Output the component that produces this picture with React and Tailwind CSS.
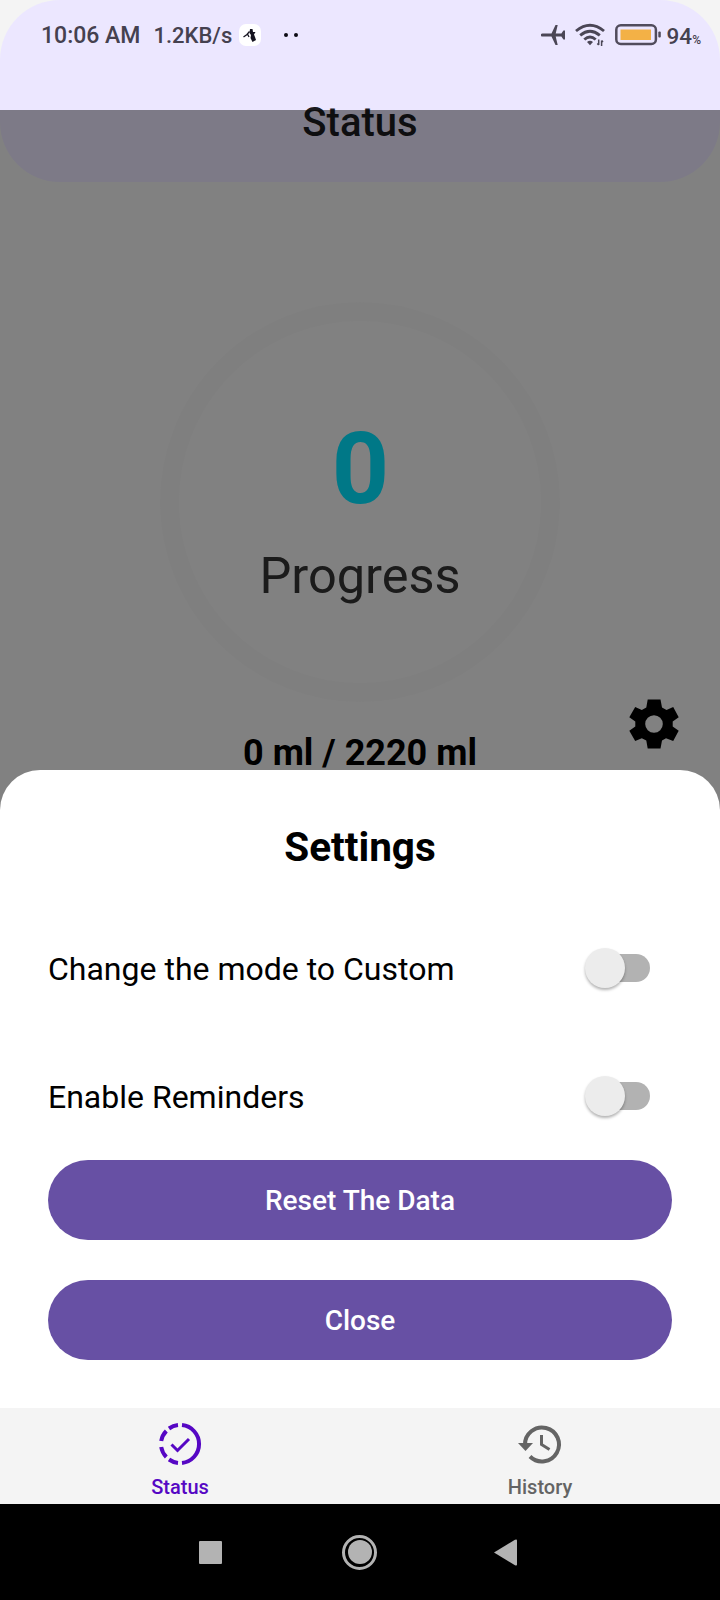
import React from "react";

function StatusBar() {
  return (
    <div className="flex h-[70px] items-center text-[#45414f]">
      <span className="ml-[41px] whitespace-pre text-[23px] leading-[27px] font-medium">10:06 AM</span>
      <span className="ml-[13px] pt-px text-[22px] leading-[27px] font-medium">1.2KB/s</span>
      <span className="ml-[7px] flex size-[22px] items-center justify-center rounded-[7px] bg-white">
        <svg viewBox="0 0 22 22" className="size-[22px]">
          <path d="M11 5l2.500 0 .5 3 2.500 0-1.500 2.500 1 2.500 1 3-3.500 2-2-4 .5-3-1.500-2z" fill="#15131f" />
          <path d="M10.500 7.500L8 10.500 4.500 13M8.500 10l1.500 3" fill="none" stroke="#15131f" strokeWidth="1.300" />
        </svg>
      </span>
      <span className="ml-[23px] flex gap-[6px]">
        <i className="size-1 rounded-full bg-[#0d0b14]" />
        <i className="size-1 rounded-full bg-[#0d0b14]" />
      </span>
      <svg viewBox="0 0 24 22" className="ml-auto h-[22px] w-6" fill="#4b4656">
        <path d="M1.500 9.400h9L14.500 1h2.200l-2 8.400h5.700L22.400 6.500H24v9h-1.600l-2-2.900h-5.700l2 8.400h-2.200l-4-8.400h-9a1.600 1.600 0 0 1 0-3.200z" />
      </svg>
      <svg viewBox="0 0 30 24" className="ml-[10px] h-6 w-[30px]" fill="none" stroke="#4b4656" strokeWidth="2.900">
        <path d="M1 8Q15-3.500 29 8M5.200 12.300Q15 4.300 24.800 12.300M9.300 16.500Q15 11.500 20.700 16.500" />
        <path d="M12 19Q15 16.500 18 19L15 22.300z" fill="#4b4656" stroke="none" />
        <path d="M23.700 16.500v5.500M26.600 17.500v5.500M22.300 20.500l1.400 1.500M28 19l-1.400-1.500" strokeWidth="1.500" />
      </svg>
      <svg viewBox="0 0 46 22" className="ml-[10px] h-[22px] w-[46px]">
        <rect x="1.300" y="1.300" width="39.600" height="18.600" rx="4.500" fill="none" stroke="#514c5c" strokeWidth="2.500" />
        <rect x="5.500" y="5.500" width="30.500" height="10.500" fill="#f3b146" />
        <rect x="43.300" y="7.500" width="2.500" height="6" rx="1" fill="#514c5c" />
      </svg>
      <span className="mr-[19px] ml-[6px] flex items-baseline pt-[2px]">
        <span className="text-[22.500px] leading-[27px] font-medium">94</span>
        <span className="text-[12px] font-medium">%</span>
      </span>
    </div>
  );
}

function Switch({ label }) {
  return (
    <div className="flex h-16 items-center justify-between">
      <span className="pt-[2px] text-[32px] leading-[38px] text-black">{label}</span>
      <span className="mr-[22px] flex h-7 w-[62px] items-center rounded-full bg-[#b2b2b2]">
        <span className="-ml-[3px] size-10 shrink-0 rounded-full bg-[#ececec] shadow-[0_2px_3px_rgba(0,0,0,0.3)]" />
      </span>
    </div>
  );
}

export default function App() {
  return (
    <div className="relative flex h-[1600px] w-[720px] flex-col overflow-hidden bg-[#f4f4f4] font-[Roboto,sans-serif]">
      <header className="flex h-[182px] shrink-0 flex-col rounded-[60px] bg-[#ece7ff]">
        <StatusBar />
        <h1 className="mt-[29px] text-center text-[40px] leading-[47px] font-medium text-[#1c1b1f]">Status</h1>
      </header>

      <main className="flex flex-1 flex-col items-center pt-[120px]">
        <div className="flex size-[400px] flex-col items-center rounded-full border-[19px] border-[#f0f0f0] pt-[89px]">
          <span className="pl-px text-[100px] leading-[117px] font-bold text-[#00e2ff]">0</span>
          <span className="mt-[19px] text-[50.500px] leading-[59px] text-[#333]">Progress</span>
        </div>
        <p className="mt-[30px] text-[36px] leading-[42px] font-bold text-black">0 ml / 2220 ml</p>
      </main>

      <div className="absolute inset-x-0 top-[110px] flex h-[1298px] flex-col justify-end bg-black/47">
        <svg viewBox="0 0 50 50" className="mr-[41px] mb-[21px] size-[50px] self-end">
          <path
            fillRule="evenodd"
            d="M18.700.5H31.500L33 8.500 37.500 11 44.200 8 49.700 18.300 43.700 22.500V27.500L49.700 31.800 44.200 42 37 39.200 33 41.500 31.500 49.500H18.700L17.300 41.500 12.800 39.200 6.200 42 .3 31.800 6.300 27.500V22.500L.3 18.300 6.200 8 12.800 11 17.300 8.500zM25 16.200A8.800 8.800 0 1 0 25 33.800A8.800 8.800 0 1 0 25 16.200z"
          />
        </svg>
        <section className="flex h-[638px] flex-col rounded-t-[40px] bg-white px-12">
          <h2 className="mt-[54px] text-center text-[40.500px] leading-[47px] font-bold text-black">Settings</h2>
          <div className="mt-[65px] flex flex-col gap-16">
            <Switch label="Change the mode to Custom" />
            <Switch label="Enable Reminders" />
          </div>
          <button className="mt-[32px] h-20 rounded-full bg-[#6750a4] text-[28px] leading-[33px] font-medium text-white">Reset The Data</button>
          <button className="mt-10 h-20 rounded-full bg-[#6750a4] text-[28px] leading-[33px] font-medium text-white">Close</button>
        </section>
      </div>

      <nav className="grid h-24 shrink-0 grid-cols-2 bg-[#f4f4f4] text-[20px] leading-6 font-medium">
        <div className="flex flex-col items-center pt-[12px] text-[#5607c4]">
          <svg viewBox="0 0 48 48" className="size-12" fill="none" stroke="currentColor" strokeWidth="4">
            <path d="M26 5.100A19 19 0 0 1 26 42.900M22 5.100A19 19 0 0 0 13 8.500M10.300 11A19 19 0 0 0 5.200 21M5.200 27A19 19 0 0 0 10.300 37M13 39.500A19 19 0 0 0 22 42.900" />
            <path d="M15.500 24.500L21.500 30.500 33 19" strokeWidth="3" />
          </svg>
          <span className="mt-[7px]">Status</span>
        </div>
        <div className="flex flex-col items-center pt-[12px] text-[#646464]">
          <svg viewBox="0 0 48 48" className="size-12" fill="none" stroke="currentColor" strokeWidth="4">
            <path d="M9 25A17 17 0 1 1 14 36.500" />
            <path d="M2 23H17L9.500 31z" fill="currentColor" stroke="none" />
            <path d="M25.500 15V24.500L33.500 29.500" strokeWidth="3" />
          </svg>
          <span className="mt-[7px]">History</span>
        </div>
      </nav>

      <div className="flex h-24 shrink-0 items-center bg-black pl-[199px]">
        <span className="size-[23px] rounded-[1px] bg-[#b3b3b3]" />
        <span className="ml-[120px] flex size-[35px] items-center justify-center rounded-full border-[3px] border-[#b3b3b3]">
          <span className="size-[24px] rounded-full bg-[#b3b3b3]" />
        </span>
        <svg viewBox="0 0 23 27" className="ml-[117px] h-[27px] w-[23px]" fill="#b3b3b3">
          <path d="M0 13.500L21 .8Q23 0 23 1.500V25.500Q23 27 21 26.200z" />
        </svg>
      </div>
    </div>
  );
}
